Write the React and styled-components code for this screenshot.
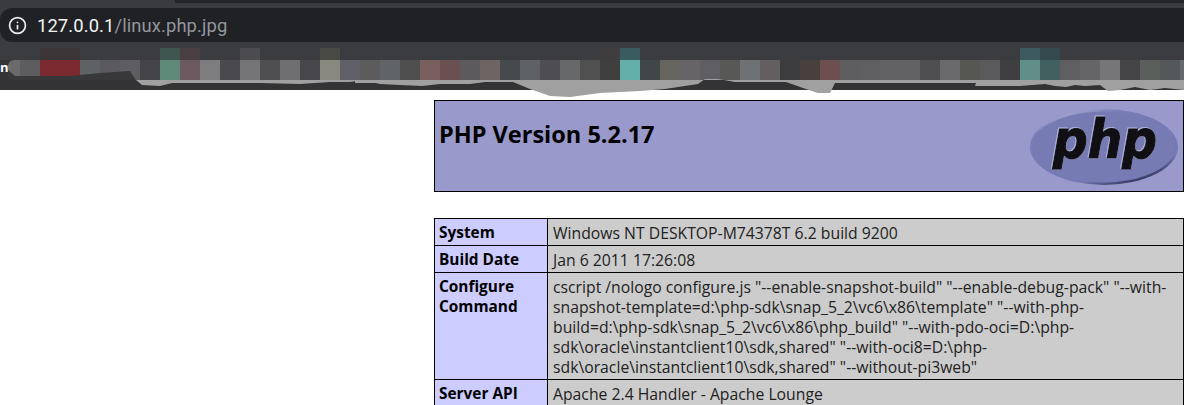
import React from "react";
import styled, { createGlobalStyle } from "styled-components";
import { Info } from "lucide-react";

const tiles = [
    { bottom: "#5d5d60" },
    { bottom: "#7b2b30", top: "#3d3638" },
    { bottom: "#7b2b30", top: "#3d3638" },
    { bottom: "#5e6265" },
    { bottom: "#5a5a5e" },
    { bottom: "#5e5e62" },
    { bottom: "#454549" },
    { bottom: "#5f8a7a", top: "#3e5550" },
    { bottom: "#6d5a60", top: "#4a3f43" },
    { bottom: "#7d7d80" },
    { bottom: "#4a4a4e" },
    { bottom: "#757578", top: "#4c4c50" },
    { bottom: "#4f4f52" },
    { bottom: "#6f6f72" },
    { bottom: "#48484c" },
    { bottom: "#88887f", top: "#4a4a44" },
    { bottom: "#5f6068" },
    { bottom: "#5c5c5c" },
    { bottom: "#606468" },
    { bottom: "#4f4f4f" },
    { bottom: "#7a5f5f" },
    { bottom: "#6a5050" },
    { bottom: "#5c5a5c" },
    { bottom: "#6f6464" },
    { bottom: "#474a4c" },
    { bottom: "#5e6264" },
    { bottom: "#4e4e52" },
    { bottom: "#66686a" },
    { bottom: "#505050" },
    { bottom: "#3f3f40", top: "#3f3d3d" },
    { bottom: "#63b0aa", top: "#3a5c5e" },
    { bottom: "#414648" },
    { bottom: "#65645f" },
    { bottom: "#666467" },
    { bottom: "#5e5e63" },
    { bottom: "#585857" },
    { bottom: "#6f7274" },
    { bottom: "#635e60" },
    { bottom: "#3c3c3e" },
    { bottom: "#48403f" },
    { bottom: "#6d4f4f" },
    { bottom: "#5e5e60" },
    { bottom: "#5f5f62" },
    { bottom: "#626265" },
    { bottom: "#626265" },
    { bottom: "#4f4f51" },
    { bottom: "#6a6a6c" },
    { bottom: "#565652" },
    { bottom: "#5a5a5c" },
    { bottom: "#3f3f41" },
    { bottom: "#5f8f88", top: "#3c5a60" },
    { bottom: "#426060", top: "#354a4e" },
    { bottom: "#5f5f62" },
    { bottom: "#656568" },
    { bottom: "#767678" },
    { bottom: "#454548" },
    { bottom: "#5a5f5c" },
    { bottom: "#54585a" },
    { bottom: "#666b6d" },
];

const rows = [
    { label: "System", value: "Windows NT DESKTOP-M74378T 6.2 build 9200" },
    { label: "Build Date", value: "Jan 6 2011 17:26:08" },
    {
        label: "Configure Command",
        value: 'cscript /nologo configure.js "--enable-snapshot-build" "--enable-debug-pack" "--with-snapshot-template=d:\\php-sdk\\snap_5_2\\vc6\\x86\\template" "--with-php-build=d:\\php-sdk\\snap_5_2\\vc6\\x86\\php_build" "--with-pdo-oci=D:\\php-sdk\\oracle\\instantclient10\\sdk,shared" "--with-oci8=D:\\php-sdk\\oracle\\instantclient10\\sdk,shared" "--without-pi3web"',
    },
    { label: "Server API", value: "Apache 2.4 Handler - Apache Lounge" },
];

const App = () => {
    return (
        <React.Fragment>
            <GlobalStyle />
            <Browser>
                <TopEdge />
                <AddressRow>
                    <AddressPill>
                        <Info size={19} strokeWidth={2.2} color="#e8eaed" />
                        <Url>
                            <Host>127.0.0.1</Host>/linux.php.jpg
                        </Url>
                    </AddressPill>
                </AddressRow>
                <BookmarkBar>
                    <CutLabel>n</CutLabel>
                    <FirstTile />
                    {tiles.map((tile, index) => (
                        <Tile key={index} $top={tile.top} $bottom={tile.bottom} />
                    ))}
                </BookmarkBar>
                <TornEdge viewBox="0 0 1184 28" preserveAspectRatio="none">
                    <path
                        fill="#38383a"
                        d="M8 0 L15 6 L70 6 L100 3 L130 1 L136 10 L8 10 Z"
                    />
                    <path
                        fill="#a0a0a0"
                        d="M136 10 L1184 10 L1184 20 L1165 18 L1150 20 L1135 17 L1120 20 L1108 21 L1100 15 L1085 16 L1075 15 L1066 17 L1055 16 L1045 14 L1020 16 L975 16 L976 13 L900 13 L835 13 L830 23 L818 23 L803 18 L786 12 L760 12 L735 12 L718 9 L705 9 L698 14 L665 19 L640 21 L600 23 L570 27 L550 26 L530 19 L513 12 L485 12 L470 14 L440 14 L422 16 L400 15 L380 14 L362 10 L350 12 L330 12 L300 14 L260 13 L172 13 L160 16 L142 15 Z"
                    />
                    <path fill="#a0a0a0" d="M355 10 L395 10 L395 13 L355 13 Z" />
                </TornEdge>
            </Browser>
            <Content>
                <Report>
                    <Banner>
                        <Title>PHP Version 5.2.17</Title>
                        <PhpLogo viewBox="0 0 150 78">
                            <defs>
                                <linearGradient id="oval" x1="0.2" y1="0" x2="0.75" y2="1">
                                    <stop offset="0" stopColor="#b4b6da" />
                                    <stop offset="0.18" stopColor="#7a7eb8" />
                                    <stop offset="0.8" stopColor="#7478b2" />
                                    <stop offset="1" stopColor="#22264a" />
                                </linearGradient>
                            </defs>
                            <ellipse cx="75" cy="39" rx="74" ry="38" fill="url(#oval)" />
                            <ellipse cx="74.5" cy="39" rx="71.5" ry="35.5" fill="#777bb4" />
                            <LogoText x="76" y="50" textLength="104" lengthAdjust="spacingAndGlyphs">
                                php
                            </LogoText>
                        </PhpLogo>
                    </Banner>
                    <InfoTable>
                        <tbody>
                            {rows.map((row) => (
                                <tr key={row.label}>
                                    <LabelCell>{row.label}</LabelCell>
                                    <ValueCell>{row.value}</ValueCell>
                                </tr>
                            ))}
                        </tbody>
                    </InfoTable>
                </Report>
            </Content>
        </React.Fragment>
    );
};

const GlobalStyle = createGlobalStyle`
    html, body {
        margin: 0;
        height: 405px;
        overflow: hidden;
        background-color: #ffffff;
    }
`;

const Browser = styled.header`
    position: relative;
    height: 90px;
    background-color: #333335;
`;

const TopEdge = styled.div`
    height: 8px;
    background: linear-gradient(#232427, #232427) no-repeat 175px 0 / 100% 3px, #3a3b3f;
`;

const AddressRow = styled.div`
    height: 34px;
    background-color: #3a3b3f;
`;

const AddressPill = styled.div`
    height: 34px;
    display: flex;
    align-items: center;
    gap: 10px;
    padding-left: 8px;
    background-color: #202124;
    border-radius: 12px 0 0 12px;
`;

const Url = styled.div`
    font-family: "Roboto", "Liberation Sans", sans-serif;
    font-size: 18.4px;
    color: #92969b;
    letter-spacing: 0.1px;
`;

const Host = styled.span`
    color: #f1f3f4;
`;

const BookmarkBar = styled.div`
    display: flex;
    height: 38px;
    padding-top: 6px;
    overflow: hidden;
    background: linear-gradient(to bottom, #3b3c40 0, #3b3c40 18px, #333335 18px);
`;

const CutLabel = styled.div`
    width: 8px;
    flex-shrink: 0;
    padding-top: 11px;
    font-family: "Open Sans", sans-serif;
    font-size: 13px;
    font-weight: 700;
    line-height: 16px;
    color: #ffffff;
`;

const FirstTile = styled.div`
    width: 12px;
    height: 20px;
    flex-shrink: 0;
    margin-top: 12px;
    background-color: #6a6a6c;
    border-radius: 6px 0 0 6px;
`;

const Tile = styled.div`
    width: 20px;
    height: 32px;
    flex-shrink: 0;
    background: linear-gradient(
        to bottom,
        ${(props) => props.$top || "transparent"} 0,
        ${(props) => props.$top || "transparent"} 12px,
        ${(props) => props.$bottom} 12px
    );
`;

const TornEdge = styled.svg`
    position: absolute;
    left: 0;
    top: 70px;
    width: 1184px;
    height: 28px;
`;

const Content = styled.main`
    display: flex;
    justify-content: flex-end;
    padding-top: 10px;
`;

const Report = styled.div`
    width: 750px;
    font-family: "Open Sans", "Noto Sans", sans-serif;
    color: #111111;
`;

const Banner = styled.div`
    height: 92px;
    box-sizing: border-box;
    display: flex;
    justify-content: space-between;
    align-items: flex-start;
    padding: 7px 4px 0 4px;
    background-color: #9999cc;
    border: 1px solid #000000;
`;

const Title = styled.h1`
    margin: 10px 0 0 0;
    font-size: 23.5px;
    font-weight: 700;
    line-height: 32px;
    color: #000000;
`;

const PhpLogo = styled.svg`
    width: 150px;
    height: 78px;
`;

const LogoText = styled.text`
    font-family: "DejaVu Sans", sans-serif;
    font-size: 54px;
    font-weight: 700;
    font-style: italic;
    text-anchor: middle;
    fill: #101014;
    stroke: #101014;
    stroke-width: 1.2px;
    filter: drop-shadow(0.7px 0.7px 0 #c8cae6) drop-shadow(-0.5px -0.5px 0 #a8aad6);
`;

const InfoTable = styled.table`
    width: 750px;
    margin-top: 26px;
    border-collapse: collapse;
    table-layout: fixed;
    font-size: 15.4px;
    line-height: 20px;
`;

const LabelCell = styled.td`
    width: 104px;
    padding: 4px 4px 2px 4px;
    vertical-align: top;
    font-weight: 700;
    color: #000000;
    background-color: #ccccff;
    border: 1px solid #000000;
`;

const ValueCell = styled.td`
    padding: 4px 4px 2px 5px;
    vertical-align: top;
    font-size: 15.75px;
    color: #222222;
    background-color: #cccccc;
    border: 1px solid #000000;
`;

export default App;
